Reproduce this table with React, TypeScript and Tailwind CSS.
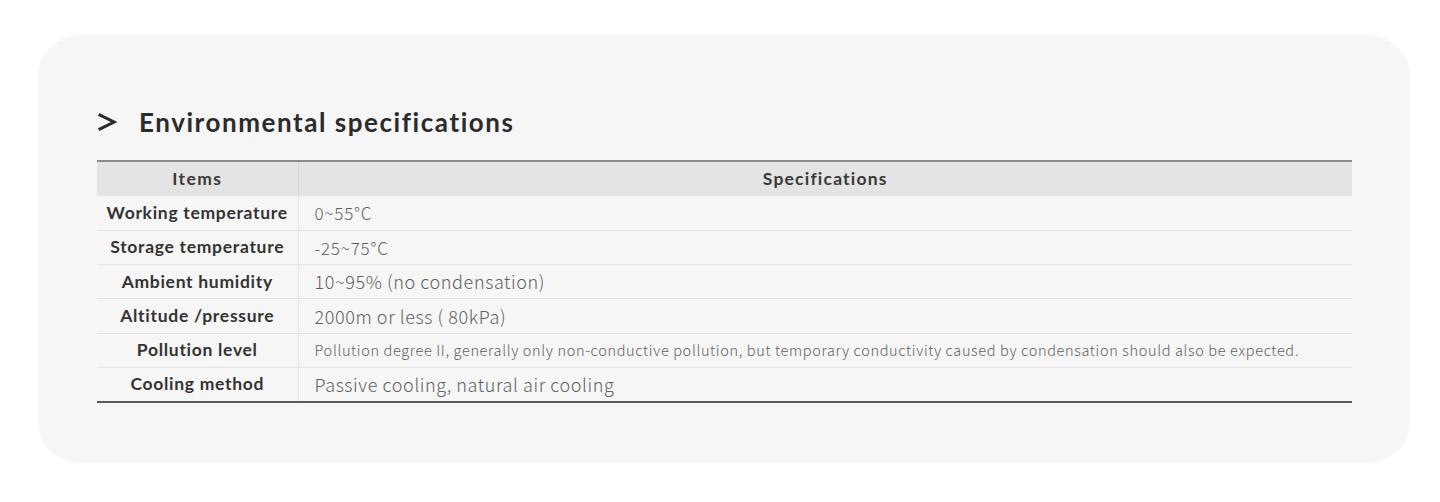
const rows = [
  { item: "Working temperature", spec: "0~55°C", size: "text-[17px] tracking-[0.8px]" },
  { item: "Storage temperature", spec: "-25~75°C", size: "text-[17px] tracking-[0.8px]" },
  { item: "Ambient humidity", spec: "10~95% (no condensation)", size: "text-[18px] tracking-[0.6px]" },
  { item: "Altitude /pressure", spec: "2000m or less ( 80kPa)", size: "text-[18px] tracking-[0.6px]" },
  {
    item: "Pollution level",
    spec: "Pollution degree II, generally only non-conductive pollution, but temporary conductivity caused by condensation should also be expected.",
    size: "text-[14.5px] tracking-[0.65px]",
  },
  { item: "Cooling method", spec: "Passive cooling, natural air cooling", size: "text-[18px] tracking-[0.6px]" },
];

export default function App() {
  return (
    <div className="min-h-[502px] w-full bg-white pl-[38px] pr-[30px] pt-[35px] pb-[39px]">
      <section className="h-[428px] rounded-[42px] bg-[#f6f6f6] pl-[59px] pr-[58px] pt-[69px]">
        <h2 className="flex items-center gap-[22px] font-['Lato',sans-serif] text-[26px] font-bold leading-[36px] tracking-[1.55px] text-[#2b2b2b]">
          <svg width="20" height="20" viewBox="0 0 20 20" fill="none" stroke="#2b2b2b" strokeWidth="3" strokeLinecap="square">
            <path d="M3 3l14 7-14 7" />
          </svg>
          Environmental specifications
        </h2>
        <table className="mt-[20px] w-full border-collapse font-['Noto_Sans_CJK_SC','Noto_Sans',sans-serif]">
          <thead>
            <tr className="h-[35px] border-t-2 border-[#8a8a8a] bg-[#e4e4e4]">
              <th className="w-[201px] border-r border-[#d6d6d6] font-['Lato',sans-serif] text-[17.5px] font-bold tracking-[1.4px] text-[#3a3a3a]">
                Items
              </th>
              <th className="font-['Lato',sans-serif] text-[17.5px] font-bold tracking-[1.2px] text-[#3a3a3a]">
                Specifications
              </th>
            </tr>
          </thead>
          <tbody>
            {rows.map((r, i) => (
              <tr
                key={r.item}
                className={
                  i === rows.length - 1
                    ? "h-[34.3px] border-b-2 border-[#5a5a5a]"
                    : "h-[34.3px] border-b border-[#e2e2e2]"
                }
              >
                <td className="w-[201px] border-r border-[#e2e2e2] text-center font-['Lato',sans-serif] text-[17.5px] font-bold tracking-[0.7px] text-[#333]">
                  {r.item}
                </td>
                <td className={`pl-[16px] font-light text-[#5f5f5f] ${r.size}`}>{r.spec}</td>
              </tr>
            ))}
          </tbody>
        </table>
      </section>
    </div>
  );
}
